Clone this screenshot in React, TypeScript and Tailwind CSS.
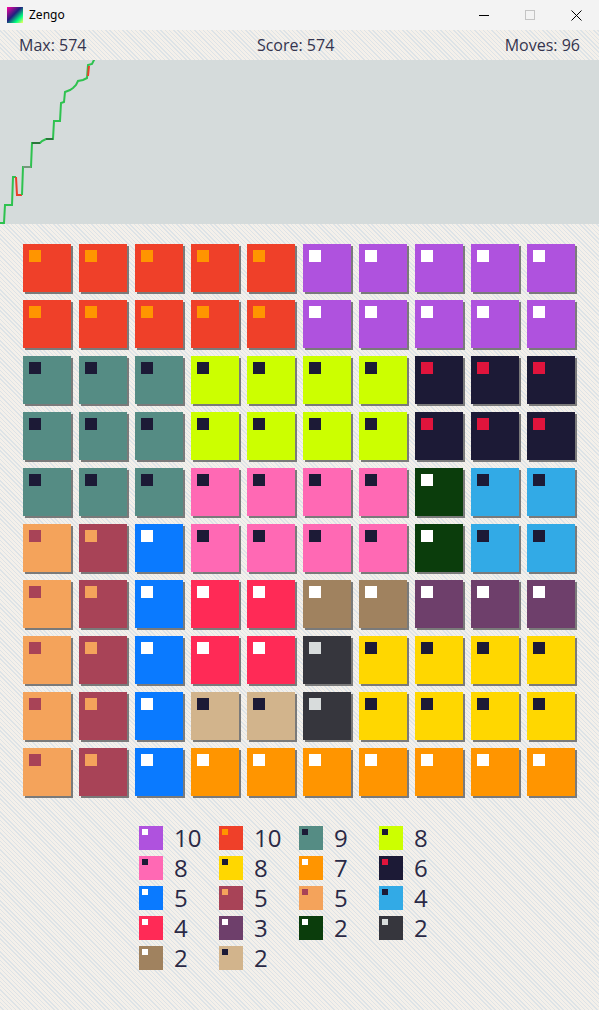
const C = {
  red: '#ef4029',
  orange: '#ff9500',
  purple: '#af52de',
  white: '#ffffff',
  teal: '#558c84',
  navy: '#1c1a36',
  lime: '#ccff00',
  crimson: '#e0143c',
  pink: '#ff69b4',
  dkgreen: '#0b3d0c',
  sky: '#32aae6',
  sandy: '#f4a35b',
  maroon: '#a84357',
  blue: '#0a7aff',
  rose: '#ff2a56',
  brown: '#a0825f',
  plum: '#6e3f6b',
  charcoal: '#36363d',
  silver: '#d8dcdc',
  yellow: '#ffd700',
  tan: '#d2b48c',
}

type Tile = [string, string]

const T: Record<string, Tile> = {
  R: [C.red, C.orange],
  P: [C.purple, C.white],
  E: [C.teal, C.navy],
  L: [C.lime, C.navy],
  N: [C.navy, C.crimson],
  K: [C.pink, C.navy],
  G: [C.dkgreen, C.white],
  S: [C.sky, C.navy],
  A: [C.sandy, C.maroon],
  M: [C.maroon, C.sandy],
  B: [C.blue, C.white],
  D: [C.rose, C.white],
  W: [C.brown, C.white],
  U: [C.plum, C.white],
  C: [C.charcoal, C.silver],
  Y: [C.yellow, C.navy],
  T: [C.tan, C.navy],
  O: [C.orange, C.white],
}

const board = [
  'RRRRRPPPPP',
  'RRRRRPPPPP',
  'EEELLLLNNN',
  'EEELLLLNNN',
  'EEEKKKKGSS',
  'AMBKKKKGSS',
  'AMBDDWWUUU',
  'AMBDDCYYYY',
  'AMBTTCYYYY',
  'AMBOOOOOOO',
]

const legend: [string, number][] = [
  ['P', 10], ['R', 10], ['E', 9], ['L', 8],
  ['K', 8], ['Y', 8], ['O', 7], ['N', 6],
  ['B', 5], ['M', 5], ['A', 5], ['S', 4],
  ['D', 4], ['U', 3], ['G', 2], ['C', 2],
  ['W', 2], ['T', 2],
]

// chart points in page coordinates (y from top of window)
const green = [
  [0, 223], [4, 223], [5, 205], [12, 205], [13, 177], [16, 177],
]
const red1 = [[16, 177], [17, 195], [22, 195]]
const green2 = [
  [22, 195], [23, 167], [31, 167], [32, 143], [40, 143], [42, 141], [46, 139], [53, 139],
  [54, 121], [60, 121], [61, 103], [64, 102], [65, 92], [70, 90], [73, 88], [76, 85],
  [78, 81], [83, 80], [87, 78], [88, 65], [92, 64], [95, 58],
]

const pts = (a: number[][]) => a.map(([x, y]) => `${x},${y - 60}`).join(' ')

function Chart() {
  return (
    <div className="h-[164px] bg-[#d5dbdb]">
      <svg width="599" height="164" viewBox="0 0 599 164">
        <polyline points={pts(green)} fill="none" stroke="#2ec24f" strokeWidth="2" />
        <polyline points={pts(red1)} fill="none" stroke="#e8402a" strokeWidth="2" />
        <polyline points={pts(green2)} fill="none" stroke="#2ec24f" strokeWidth="2" />
        <polyline points={pts([[88, 76], [89, 66]])} fill="none" stroke="#e8402a" strokeWidth="2" />
        <polyline points={pts([[32, 143], [40, 143]])} fill="none" stroke="#2b2b2b" strokeWidth="1" />
        <polyline points={pts([[46, 139], [53, 139]])} fill="none" stroke="#2b2b2b" strokeWidth="1" />
        <polyline points={pts([[23, 167], [31, 167]])} fill="none" stroke="#8a8a8a" strokeWidth="1.5" />
      </svg>
    </div>
  )
}

function TitleBar() {
  return (
    <div className="h-[30px] bg-[#f3f3f3] flex items-center font-['Noto_Sans',sans-serif] text-[12px] text-black">
      <div className="ml-[7px] w-4 h-4 bg-[linear-gradient(135deg,#ff00a0_0%,#202080_45%,#00ff80_75%,#ffff60_100%)]" />
      <span className="ml-[6px]">Zengo</span>
      <div className="ml-auto flex items-center h-full">
        <div className="w-[46px] h-full flex items-center justify-center">
          <div className="w-[10px] h-px bg-black" />
        </div>
        <div className="w-[46px] h-full flex items-center justify-center">
          <div className="w-[10px] h-[10px] border border-[#c4c4c4]" />
        </div>
        <div className="w-[46px] h-full flex items-center justify-center">
          <svg width="11" height="11" viewBox="0 0 11 11">
            <path d="M0.5 0.5L10.5 10.5M10.5 0.5L0.5 10.5" stroke="#000" strokeWidth="1" />
          </svg>
        </div>
      </div>
    </div>
  )
}

export default function App() {
  return (
    <div className="w-[599px] min-h-[1010px] bg-[repeating-linear-gradient(45deg,#f4f0ea_0px,#f4f0ea_2px,#dde3e7_2px,#dde3e7_3px)] font-['Open_Sans',sans-serif] text-[#34344e]">
      <TitleBar />
      <div className="h-[30px] flex items-center justify-between px-[19px] text-[16px]">
        <span>Max: 574</span>
        <span>Score: 574</span>
        <span>Moves: 96</span>
      </div>
      <Chart />
      <div className="mt-5 ml-[23px] w-[552px] grid grid-cols-10 gap-2">
        {board.flatMap((row, r) =>
          row.split('').map((k, c) => {
            const [bg, dot] = T[k]
            return (
              <div
                key={`${r}-${c}`}
                className="w-12 h-12 shadow-[2px_2px_0_#7a7a7a] p-[6px]"
                style={{ backgroundColor: bg }}
              >
                <div className="w-3 h-3" style={{ backgroundColor: dot }} />
              </div>
            )
          })
        )}
      </div>
      <div className="mt-[30px] ml-[139px] w-[320px] grid grid-cols-4 gap-y-[6px]">
        {legend.map(([k, n], i) => {
          const [bg, dot] = T[k]
          return (
            <div key={i} className="flex items-center h-6">
              <div className="w-6 h-6 p-[3px]" style={{ backgroundColor: bg }}>
                <div className="w-[6px] h-[6px]" style={{ backgroundColor: dot }} />
              </div>
              <span className="ml-[11px] text-[24px] leading-none text-[#2a2945]">{n}</span>
            </div>
          )
        })}
      </div>
    </div>
  )
}
